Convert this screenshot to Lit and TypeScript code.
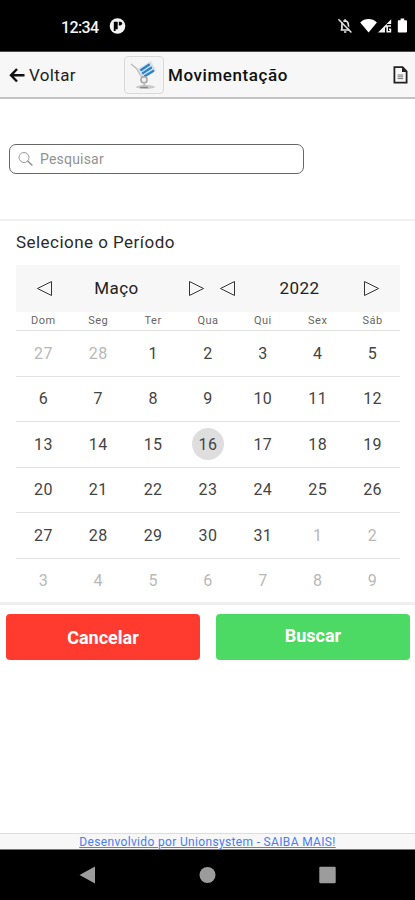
import { LitElement, html, css, svg } from "lit";
import { customElement } from "lit/decorators.js";
import { classMap } from "lit/directives/class-map.js";

const WEEKDAYS = ["Dom", "Seg", "Ter", "Qua", "Qui", "Sex", "Sáb"];

const WEEKS = [
  [27, 28, 1, 2, 3, 4, 5],
  [6, 7, 8, 9, 10, 11, 12],
  [13, 14, 15, 16, 17, 18, 19],
  [20, 21, 22, 23, 24, 25, 26],
  [27, 28, 29, 30, 31, 1, 2],
  [3, 4, 5, 6, 7, 8, 9],
];

@customElement("status-bar")
class StatusBar extends LitElement {
  static styles = css`
    :host { display: flex; box-sizing: border-box; height: 52px; background: #000; color: #f4f4f4; padding: 1px 6px 0 61px; align-items: center; border-bottom: 1px solid #4a4a4a; }
    .time { font: 500 16px Roboto, sans-serif; letter-spacing: -0.6px; width: 48px; white-space: nowrap; padding-top: 2px; }
    svg { display: block; flex: none; }
    .right { margin-left: auto; }
  `;
  render() {
    return html`
      <span class="time">12:34</span>
      <svg width="18" height="18" viewBox="0 0 18 18">
        <circle cx="8.5" cy="9" r="7.8" fill="#f4f4f4" />
        <path d="M4.8 4.8h3.9v7.4H6.6V14H4.8z" fill="#000" />
        <path d="M9.8 4.8h1.6a1.7 1.7 0 0 1 0 3.6H9.8z" fill="#000" />
      </svg>
      <svg class="right" width="72" height="18" viewBox="0 0 72 18">
        <path d="M3.6 13h8.9M4.9 12.8V8.4c0-2.5 1.3-4.2 3.2-4.5V2.3M8.1 3.9c2 .3 3.3 2 3.3 4.5v4.4M7 15h2.4" fill="none" stroke="#e4e4e4" stroke-width="1.7" />
        <path d="M2.6 1.5l12.2 12.6" stroke="#000" stroke-width="1.2" />
        <path d="M1.4 2.2l13 13.3" stroke="#e4e4e4" stroke-width="1.5" />
        <path d="M23.2 5.4C27.5.9 35.5.9 39.9 5.4L31.6 15.6z" fill="#fff" />
        <path d="M41 15.6L54.2 2.2V7h-4.4v3.6H48v5z" fill="#f4f4f4" />
        <path d="M54 9h-3.8v5.8h3.2v-2.6h-1.4" fill="none" stroke="#f4f4f4" stroke-width="1.6" />
        <path d="M61.2 3.3h2.4V1.6h3.6v1.7H69a1 1 0 0 1 1 1v10.3a1 1 0 0 1-1 1h-7.2a1 1 0 0 1-1-1V4.3z" fill="#fff" />
      </svg>
    `;
  }
}

@customElement("top-bar")
class TopBar extends LitElement {
  static styles = css`
    :host { display: flex; align-items: center; box-sizing: border-box; height: 47px; background: #f7f7f7; border-bottom: 2px solid #c2c2c2; padding: 0 7px 0 9px; font-family: Roboto, sans-serif; color: #111; }
    svg { display: block; flex: none; }
    .back { font-size: 17px; letter-spacing: 0.35px; margin-left: 4px; width: 95px; padding-top: 1px; box-sizing: border-box; color: #222; }
    .logo { box-sizing: border-box; width: 40px; height: 38px; border: 1px solid #d9d9d9; border-radius: 4px; background: #f5f5f5; }
    .title { font-size: 17px; font-weight: 500; letter-spacing: 0.58px; margin-left: 4px; flex: 1; padding-top: 1px; }
  `;
  render() {
    return html`
      <svg width="16" height="16" viewBox="0 0 16 16"><path d="M8 2L2 8.3l6 6.2M2 8.3h13.5" fill="none" stroke="#111" stroke-width="2.4" /></svg>
      <span class="back">Voltar</span>
      <span class="logo">
        <svg width="38" height="36" viewBox="0 0 38 36">
          <ellipse cx="20.5" cy="30" rx="9.5" ry="1.9" fill="#c9c9c9" />
          <path d="M15 30.5h8" stroke="#8a8a8a" stroke-width="1.4" />
          <path d="M6 7l5.5 4.5 6 10" fill="none" stroke="#b9b9b9" stroke-width="1.3" />
          <path d="M12.5 12L26 4l5 9.5-12.5 8.5z" fill="#dce0e3" />
          <path d="M15.4 13.5l9.3-6.2M17.1 16.6l9.8-6.4M19.2 19.4l9.8-6" stroke="#2485cf" stroke-width="2.3" />
          <circle cx="19" cy="22.8" r="3.1" fill="#eee" stroke="#a5a5a5" stroke-width="1.5" />
          <path d="M19.3 25.8v4" stroke="#bbb" stroke-width="2" />
        </svg>
      </span>
      <span class="title">Movimentação</span>
      <svg width="15" height="18" viewBox="0 0 15 18">
        <path d="M1.4 1.2h8.2l4 4.1v11.3H1.4z" fill="none" stroke="#222" stroke-width="1.8" />
        <path d="M9 1v5h5z" fill="#222" />
        <path d="M4.6 9h5.6M4.6 10.8h5.6M4.6 12.6h5.6" stroke="#777" stroke-width="1" />
      </svg>
    `;
  }
}

@customElement("period-calendar")
class PeriodCalendar extends LitElement {
  static styles = css`
    :host { display: block; margin: 0 15px 0 16px; font-family: Roboto, sans-serif; }
    .head { display: grid; grid-template-columns: 1fr 1fr; height: 47px; background: #f7f7f7; font-size: 17px; color: #222; letter-spacing: 0.45px; }
    .picker { display: grid; grid-template-columns: 17px 1fr 17px; justify-items: center; align-items: center; }
    .picker span { padding-bottom: 2px; }
    .picker.month { padding: 0 3px 0 20px; }
    .picker.month span { padding-right: 8px; }
    .picker.year { padding: 0 20px 0 11px; }
    .picker svg { display: block; }
    .names, .week { display: grid; grid-template-columns: repeat(7, 1fr); justify-items: center; align-items: center; }
    .names { height: 18px; font-size: 11px; letter-spacing: 0.5px; color: #666; }
    .names span { padding-bottom: 1px; }
    .week { box-sizing: border-box; height: 45.5px; border-top: 1px solid #e2e2e2; font-size: 16px; letter-spacing: 0.4px; color: #444; }
    .day { display: flex; width: 32px; height: 32px; border-radius: 50%; align-items: center; justify-content: center; }
    .other { color: #b8b8b8; }
    .today { background: #dedede; }
  `;
  private arrow(d: string) {
    return html`<svg width="17" height="17" viewBox="0 0 17 17">${svg`<path d=${d} fill="none" stroke="#333" stroke-width="1" />`}</svg>`;
  }
  private picker(label: string, extra: string) {
    return html`<div class="picker ${extra}">
      ${this.arrow("M15.5 1.5v14L1.5 8.5z")}<span>${label}</span>${this.arrow("M1.5 1.5v14l14-7z")}
    </div>`;
  }
  render() {
    return html`
      <div class="head">${this.picker("Maço", "month")}${this.picker("2022", "year")}</div>
      <div class="names">${WEEKDAYS.map((n) => html`<span>${n}</span>`)}</div>
      ${WEEKS.map((week, w) => html`<div class="week">
        ${week.map((d) => html`<span class=${classMap({
          day: true,
          other: (w === 0 && d > 20) || (w > 3 && d < 10),
          today: w === 2 && d === 16,
        })}>${d}</span>`)}
      </div>`)}
    `;
  }
}

@customElement("app-root")
class AppRoot extends LitElement {
  static styles = css`
    :host { display: flex; flex-direction: column; height: 900px; width: 415px; background: #fff; overflow: hidden; font-family: Roboto, sans-serif; }
    status-bar, top-bar { flex: none; }
    .search-area { height: 122px; box-sizing: border-box; padding: 45px 0 0 9px; border-bottom: 2px solid #efefef; flex: none; }
    .search { box-sizing: border-box; width: 295px; height: 30px; border: 1px solid #666; border-radius: 7px; display: flex; align-items: center; gap: 6px; padding-left: 8px; color: #929292; font-size: 14px; letter-spacing: 0.2px; }
    .label { height: 44px; box-sizing: border-box; padding: 11px 0 0 16px; font-size: 17px; line-height: 20px; color: #2a2a2a; letter-spacing: 0.46px; }
    .panel { height: 384px; box-sizing: border-box; border-bottom: 3px solid #efefef; flex: none; }
    .actions { display: grid; grid-template-columns: 1fr 1fr; gap: 16px; padding: 9px 5px 0 6px; flex: 1; align-items: start; }
    .btn { box-sizing: border-box; height: 46px; border-radius: 4px; display: flex; align-items: center; justify-content: center; color: #fff; font-weight: 700; font-size: 18px; }
    .cancel { background: #ff3b30; }
    .find { background: #4cd964; padding-bottom: 3px; }
    .foot { height: 17px; box-sizing: border-box; border-top: 1px solid #ddd; border-bottom: 1px solid #777; background: #f7f7f7; display: flex; justify-content: center; font-size: 12px; line-height: 16px; letter-spacing: 0.34px; flex: none; }
    .link { color: #4b7cf3; text-decoration: underline; }
    .nav { height: 50px; background: #000; flex: none; display: flex; justify-content: space-between; padding: 0 79px; align-items: center; }
    .nav svg { display: block; }
  `;
  render() {
    return html`
      <status-bar></status-bar>
      <top-bar></top-bar>
      <div class="search-area">
        <div class="search">
          <svg width="16" height="16" viewBox="0 0 16 16"><circle cx="6" cy="6.5" r="5" fill="none" stroke="#999" /><path d="M9.6 10l4.8 4.5" stroke="#888" stroke-width="1.2" /></svg>
          <span>Pesquisar</span>
        </div>
      </div>
      <div class="panel">
        <div class="label">Selecione o Período</div>
        <period-calendar></period-calendar>
      </div>
      <div class="actions">
        <div class="btn cancel">Cancelar</div>
        <div class="btn find">Buscar</div>
      </div>
      <div class="foot"><span class="link">Desenvolvido por Unionsystem - SAIBA MAIS!</span></div>
      <div class="nav">
        <svg width="17" height="18" viewBox="0 0 17 18"><path d="M16 .5v17L.5 9z" fill="#9c9c9c" /></svg>
        <svg width="17" height="18" viewBox="0 0 17 18"><circle cx="8.5" cy="9" r="8" fill="#9c9c9c" /></svg>
        <svg width="17" height="18" viewBox="0 0 17 18"><rect x=".3" y=".8" width="16.4" height="16.4" rx="1" fill="#9c9c9c" /></svg>
      </div>
    `;
  }
}
